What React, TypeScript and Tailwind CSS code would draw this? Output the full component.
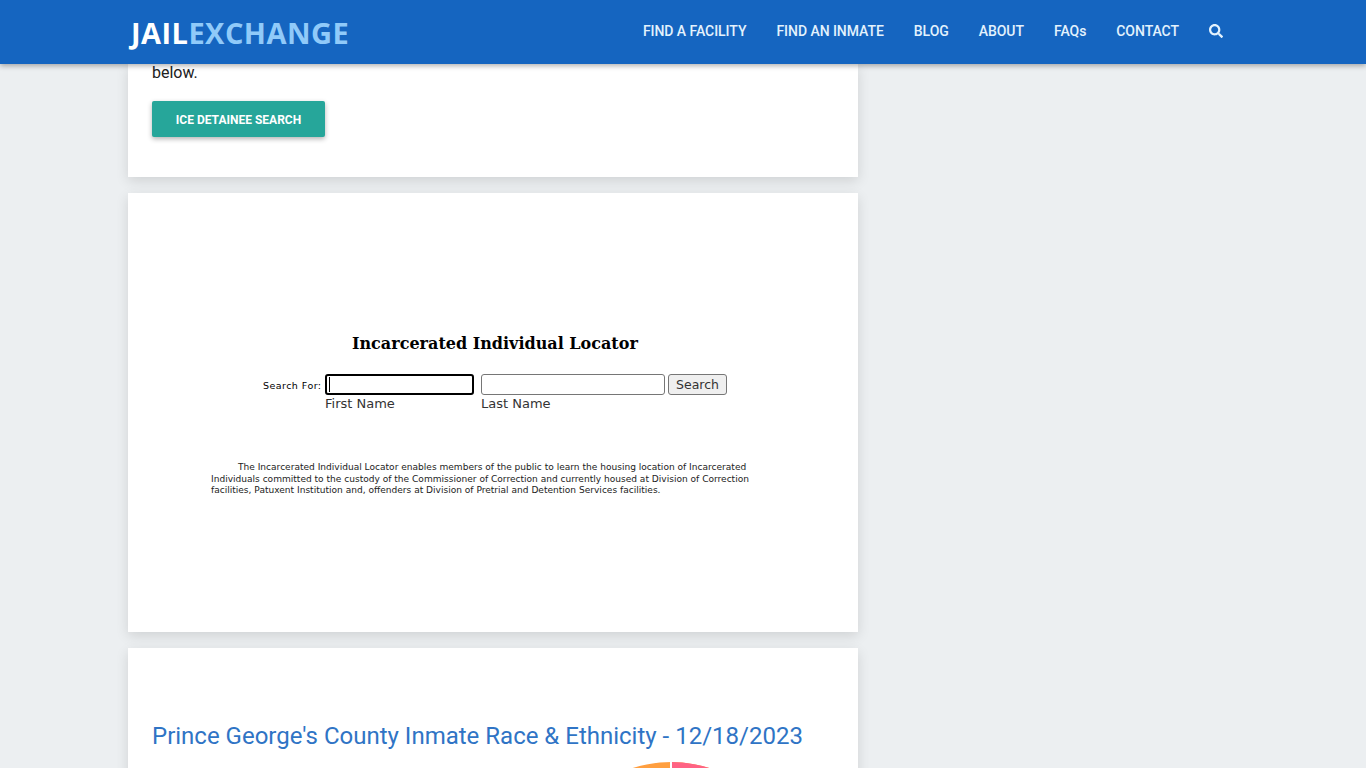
import { FaSearch } from 'react-icons/fa';

const navItems = ['FIND A FACILITY', 'FIND AN INMATE', 'BLOG', 'ABOUT', 'FAQs', 'CONTACT'];

function Header() {
  return (
    <header className="relative z-10 h-16 shrink-0 bg-[#1565c0] shadow-[0_2px_5px_rgba(0,0,0,0.3)]">
      <div className="mx-auto flex h-full w-[1110px] items-center justify-between">
        <a className="ml-[3px] flex font-['Open_Sans',sans-serif] text-[29px] font-bold leading-none tracking-[0.45px]">
          <span className="text-white">JAIL</span>
          <span className="text-[#90caf9]">EXCHANGE</span>
        </a>
        <nav className="flex items-center gap-[30px] pb-[2px] pr-[15px] font-['Roboto',sans-serif] text-[14px] font-medium tracking-[-0.05px] text-[#e3f2fd]">
          {navItems.map(item => (
            <a key={item}>{item}</a>
          ))}
          <FaSearch size={14} className="text-[#e3f2fd]" />
        </nav>
      </div>
    </header>
  );
}

function LocatorFrame() {
  return (
    <div className="h-[439px] bg-white pt-[141px] text-black shadow-[0_4px_12px_rgba(0,0,0,0.12)]">
      <h2 className="pl-[224px] font-['DejaVu_Serif',serif] text-[16px] font-bold leading-5">Incarcerated Individual Locator</h2>
      <div className="mt-[20px] flex pl-[135px] font-['DejaVu_Sans',sans-serif] text-[#333]">
        <span className="w-[62px] pt-[4px] text-[9.5px] leading-4 tracking-[0.45px] text-black">Search For:</span>
        <div className="w-[156px]">
          <div className="flex h-[21px] w-[149px] items-center rounded-[3px] border-2 border-black pl-[2px]">
            <span className="h-[15px] w-px bg-black" />
          </div>
          <div className="mt-px text-[13px] leading-4">First Name</div>
        </div>
        <div className="w-[187px]">
          <div className="h-[21px] w-[184px] rounded-[3px] border border-[#767676]" />
          <div className="mt-px text-[13px] leading-4">Last Name</div>
        </div>
        <button className="h-[21px] w-[59px] rounded-[3px] border border-[#767676] bg-[#efefef] pt-[2px] text-[12.5px] leading-none">
          Search
        </button>
      </div>
      <p className="ml-[83px] mt-[50px] w-[545px] indent-[27px] font-['DejaVu_Sans',sans-serif] text-[9.05px] leading-[11.5px] text-[#222]">
        The Incarcerated Individual Locator enables members of the public to learn the housing location of Incarcerated Individuals committed to the custody of the Commissioner of Correction and currently housed at Division of Correction facilities, Patuxent Institution and, offenders at Division of Pretrial and Detention Services facilities.
      </p>
    </div>
  );
}

export default function App() {
  return (
    <div className="flex h-screen flex-col overflow-hidden bg-[#eceff1] font-['Roboto',sans-serif]">
      <Header />
      <main className="ml-[128px] flex w-[730px] flex-col gap-4">
        <div className="h-[113px] shrink-0 bg-white px-6 shadow-[0_4px_12px_rgba(0,0,0,0.12)]">
          <p className="pt-[1px] text-base leading-4 text-[#212121]">below.</p>
          <button className="mt-5 h-9 w-[173px] rounded-[2px] bg-[#26a69a] pt-[2px] text-[12px] font-bold text-white shadow-[0_2px_5px_rgba(0,0,0,0.3)]">
            ICE DETAINEE SEARCH
          </button>
        </div>
        <LocatorFrame />
        <div className="h-[200px] shrink-0 bg-white px-6 pt-[72px] shadow-[0_4px_12px_rgba(0,0,0,0.12)]">
          <h3 className="text-[24px] leading-8 text-[#2f74c5]">Prince George's County Inmate Race &amp; Ethnicity - 12/18/2023</h3>
          <svg width="120" height="40" viewBox="0 0 120 40" className="ml-[459px] mt-[10px]">
            <circle cx="60" cy="125" r="125" fill="#ff9f40" />
            <path d="M60 0 A125 125 0 0 1 185 125 L60 125 Z" fill="#ff6384" />
            <rect x="59" y="0" width="2" height="40" fill="white" />
          </svg>
        </div>
      </main>
    </div>
  );
}
